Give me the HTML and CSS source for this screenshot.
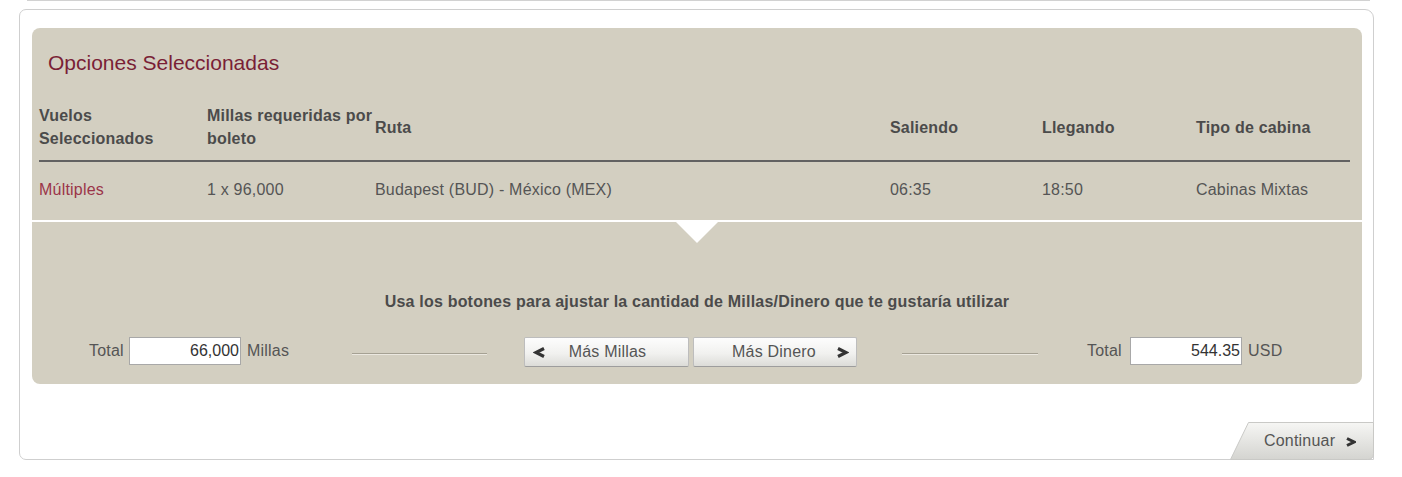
FILE: index.html
```html
<!DOCTYPE html>
<html lang="es">
<head>
<meta charset="utf-8">
<title>Opciones Seleccionadas</title>
<link rel="stylesheet" href="styles.css">
</head>
<body>
<div class="prev-line"></div>
<div class="outer">
  <div class="panel">
    <div class="summary">
      <h2 class="title">Opciones Seleccionadas</h2>
      <div class="table">
        <div class="row head">
          <div>Vuelos<br>Seleccionados</div>
          <div>Millas requeridas por<br>boleto</div>
          <div>Ruta</div>
          <div>Saliendo</div>
          <div>Llegando</div>
          <div>Tipo de cabina</div>
        </div>
        <div class="row data">
          <div class="link">Múltiples</div>
          <div>1 x 96,000</div>
          <div>Budapest (BUD) - México (MEX)</div>
          <div>06:35</div>
          <div>18:50</div>
          <div>Cabinas Mixtas</div>
        </div>
      </div>
    </div>
    <div class="divider"></div>
    <div class="adjust">
      <p class="hint">Usa los botones para ajustar la cantidad de Millas/Dinero que te gustaría utilizar</p>
      <div class="controls">
        <div class="total total-left">
          <span class="lbl">Total</span>
          <input class="amount" type="text" value="66,000" readonly>
          <span class="unit">Millas</span>
        </div>
        <div class="groove groove-left"></div>
        <div class="buttons">
          <button class="btn" type="button">
            <svg class="chev" width="13" height="11" viewBox="0 0 13 11"><polyline points="11,1.5 3,5.5 11,9.5" fill="none" stroke="#333" stroke-width="3.2" stroke-linejoin="miter"/></svg>
            <span>Más Millas</span>
            <span></span>
          </button>
          <button class="btn" type="button">
            <span></span>
            <span>Más Dinero</span>
            <svg class="chev" width="13" height="11" viewBox="0 0 13 11"><polyline points="2,1.5 10,5.5 2,9.5" fill="none" stroke="#333" stroke-width="3.2" stroke-linejoin="miter"/></svg>
          </button>
        </div>
        <div class="groove groove-right"></div>
        <div class="total total-right">
          <span class="lbl">Total</span>
          <input class="amount" type="text" value="544.35" readonly>
          <span class="unit">USD</span>
        </div>
      </div>
    </div>
  </div>
  <div class="footer">
    <a class="continuar" href="#">
      <svg class="tab-bg" width="144" height="38" viewBox="0 0 144 38">
        <defs>
          <linearGradient id="tabg" x1="0" y1="0" x2="0" y2="1">
            <stop offset="0" stop-color="#f6f6f4"/>
            <stop offset="1" stop-color="#d4d4d0"/>
          </linearGradient>
        </defs>
        <path d="M18.5 0.5 H143.5 V31.5 Q143.5 37.5 137.5 37.5 H0.5 Z" fill="url(#tabg)" stroke="#c9c9c6" stroke-width="1"/>
      </svg>
      <span class="tab-text">Continuar</span>
      <svg class="tab-chev" width="11" height="10" viewBox="0 0 11 10"><polyline points="2,1.5 9,5 2,8.5" fill="none" stroke="#333" stroke-width="3"/></svg>
    </a>
  </div>
</div>
</body>
</html>
```

FILE: styles.css
```css
* {
  box-sizing: border-box;
}

html, body {
  margin: 0;
  padding: 0;
  background: #ffffff;
}

body {
  font-family: "Liberation Sans", Arial, sans-serif;
  font-size: 16px;
  letter-spacing: 0.2px;
  color: #555555;
}

.prev-line {
  height: 1px;
  margin: 0 32px 0 27px;
  background: #d2d2d2;
}

.outer {
  width: 1355px;
  margin: 8px 0 0 19px;
  border: 1px solid #cfcfcf;
  border-radius: 7px 9px 0 7px;
  padding: 18px 11px 0 12px;
}

.panel {
  background: #d3cfc1;
  border-radius: 8px;
  overflow: hidden;
}

.summary {
  padding: 23px 12px 0 7px;
}

.title {
  margin: 0 0 0 9px;
  font-size: 21px;
  font-weight: normal;
  letter-spacing: 0;
  line-height: 24px;
  color: #7a1f36;
}

.table {
  margin-top: 29px;
}

.row {
  display: grid;
  grid-template-columns: 168px 168px 515px 152px 154px 1fr;
  align-items: center;
}

.row > div {
  white-space: nowrap;
}

.head {
  font-weight: bold;
  color: #4b4b4b;
  line-height: 23px;
  padding-bottom: 10px;
  border-bottom: 2px solid #626262;
}

.data {
  line-height: 20px;
  padding: 18px 0 20px;
}

.link {
  color: #9b3549;
}

.divider {
  height: 2px;
  background: #ffffff;
}

.adjust {
  padding: 0 0 17px;
}

.adjust::before {
  content: "";
  display: block;
  width: 0;
  height: 0;
  margin: 0 auto;
  border-left: 21px solid transparent;
  border-right: 21px solid transparent;
  border-top: 21px solid #ffffff;
}

.hint {
  margin: 49px 0 0;
  text-align: center;
  font-weight: bold;
  font-size: 16px;
  line-height: 20px;
  color: #4b4b4b;
}

.controls {
  display: flex;
  align-items: center;
  margin-top: 25px;
  padding-left: 57px;
  height: 30px;
}

.total {
  display: flex;
  align-items: center;
  margin-bottom: 3px;
}

.total-left {
  width: 201px;
}

.total-left .lbl {
  width: 40px;
}

.total-right .lbl {
  width: 43px;
}

.unit {
  margin-left: 6px;
}

.amount {
  width: 112px;
  height: 28px;
  border: 1px solid #a8a8a8;
  background: #ffffff;
  font-family: "Liberation Sans", Arial, sans-serif;
  font-size: 16px;
  color: #333333;
  text-align: right;
  padding: 0 1px;
  margin: 0;
  outline: none;
}

.groove {
  height: 2px;
  border-top: 1px solid #a5a193;
  border-bottom: 1px solid #ebe8e0;
  margin-top: 3px;
}

.groove-left {
  width: 135px;
  margin-left: 62px;
}

.groove-right {
  width: 136px;
  margin-left: 45px;
}

.buttons {
  display: flex;
  gap: 4px;
  margin-left: 37px;
}

.btn {
  display: grid;
  grid-template-columns: 20px 1fr 20px;
  align-items: center;
  width: 165px;
  height: 30px;
  padding: 0 2px 0 4px;
  border: 1px solid #bdbdbd;
  border-bottom-color: #9d9d9d;
  border-radius: 2px;
  background: linear-gradient(#fdfdfd, #f1f1ef 55%, #dcdcd8);
  font-family: "Liberation Sans", Arial, sans-serif;
  font-size: 16px;
  letter-spacing: 0.2px;
  color: #555555;
  text-align: center;
  cursor: pointer;
}

.btn + .btn {
  width: 164px;
  padding: 0 4px 0 2px;
}

.chev {
  display: block;
  margin: 0 auto;
}

.total-right {
  margin-left: 49px;
}

.footer {
  display: flex;
  justify-content: flex-end;
  margin: 38px -12px -1px 0;
}

.continuar {
  position: relative;
  display: flex;
  align-items: center;
  width: 144px;
  height: 38px;
  padding-left: 34px;
  text-decoration: none;
  color: #555555;
  font-size: 16px;
}

.tab-bg {
  position: absolute;
  left: 0;
  top: 0;
}

.tab-text {
  position: relative;
}

.tab-chev {
  position: relative;
  margin-left: 10px;
  margin-top: 2px;
}
```
